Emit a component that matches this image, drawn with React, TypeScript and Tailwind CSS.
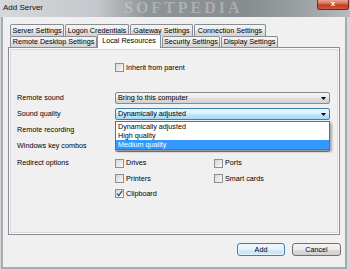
import React from 'react';

type TabProps = { label: string; w: string; active?: boolean };

function Tab({ label, w, active }: TabProps) {
  if (active) {
    return (
      <div
        className={`${w} relative z-10 -mt-[2px] h-[14px] flex items-center justify-center pb-[2px] bg-white border border-b-0 border-[#898c95] rounded-t-[2px]`}
      >
        {label}
      </div>
    );
  }
  return (
    <div
      className={`${w} h-full flex items-center justify-center bg-[linear-gradient(to_bottom,#f4f4f4_0%,#ebebeb_50%,#dddddd_51%,#d4d4d4_100%)] border border-b-0 border-[#898c95] rounded-t-[2px]`}
    >
      {label}
    </div>
  );
}

function Arrow() {
  return (
    <svg width="5" height="3" viewBox="0 0 5 3" className="shrink-0">
      <path d="M0 0h5L2.5 3z" fill="#000" />
    </svg>
  );
}

function Combo({
  value,
  focused,
  children,
}: {
  value: string;
  focused?: boolean;
  children?: React.ReactNode;
}) {
  return (
    <div className="relative w-[215px]">
      <div
        className={`h-[12px] flex items-center pl-[2px] pr-[3px] rounded-[2px] border ${
          focused
            ? 'border-[#3c7fb1] bg-[linear-gradient(to_bottom,#eaf6fd_0%,#d9f0fc_50%,#bee6fd_51%,#a7d9f5_100%)]'
            : 'border-[#8a8a8a] bg-[linear-gradient(to_bottom,#f4f4f4_0%,#ebebeb_50%,#dddddd_51%,#d2d2d2_100%)]'
        }`}
      >
        <span className="flex-1 truncate">{value}</span>
        <Arrow />
      </div>
      {children}
    </div>
  );
}

function Check({ label, checked }: { label: string; checked?: boolean }) {
  return (
    <div className="flex items-center gap-[2px]">
      <div className="w-[9px] h-[9px] shrink-0 border border-[#8e8f8f] bg-[linear-gradient(135deg,#d6d6d6,#f8f8f8)] flex items-center justify-center">
        {checked && (
          <svg width="7" height="7" viewBox="0 0 7 7">
            <path d="M1 3.6L2.8 5.6L6.2 0.8" fill="none" stroke="#2d3f78" strokeWidth="1.2" />
          </svg>
        )}
      </div>
      <span>{label}</span>
    </div>
  );
}

function Row({ label, h = 'h-[16px]', children }: { label?: string; h?: string; children: React.ReactNode }) {
  return (
    <div className={`${h} flex items-center`}>
      <div className="w-[98px] shrink-0">{label}</div>
      {children}
    </div>
  );
}

export default function App() {
  return (
    <div className="w-[350px] h-[270px] overflow-hidden flex flex-col bg-[#d3d7db] font-['Liberation_Sans',Arial,sans-serif] text-[7.2px] leading-none text-black">
      {/* title bar */}
      <div className="relative h-[17px] shrink-0 flex items-center pl-[3px] pb-[2px] overflow-hidden bg-[linear-gradient(to_right,#d6d9dc_0%,#c3c7cb_28%,#8f9496_42%,#878c8e_70%,#9ea3a6_88%,#b7bcc0_100%)]">
        <span className="relative z-10 text-[8px] text-[#111]">Add Server</span>
        <span className="absolute left-[124px] top-0 font-['Liberation_Serif',serif] text-[16px] leading-none font-bold tracking-[3px] text-white/30">
          SOFTPEDIA
        </span>
        <div className="absolute right-[1px] top-0 w-[32px] h-[10px] rounded-b-[3px] border border-t-0 border-[#6e2a1e] bg-[linear-gradient(to_bottom,#e9a898_0%,#d66550_45%,#c23b24_55%,#cf5a3c_100%)] flex items-center justify-center">
          <span className="text-white text-[8px] font-bold leading-none -mt-[1px]">x</span>
        </div>
      </div>

      {/* client */}
      <div className="flex-1 flex pl-[1px] pr-[3px] pb-[1px]">
        <div className="flex-1 flex flex-col bg-[#f0f0f0] border-[2px] border-t-0 border-[#a6abb0] pt-[7px] pl-[5px] pr-[5px]">
          {/* tabs */}
          <div className="ml-[2px] h-[12px] flex gap-[1px]">
            <Tab label="Server Settings" w="w-[54px]" />
            <Tab label="Logon Credentials" w="w-[64px]" />
            <Tab label="Gateway Settings" w="w-[63px]" />
            <Tab label="Connection Settings" w="w-[72px]" />
          </div>
          <div className="ml-[2px] h-[11px] flex items-start">
            <Tab label="Remote Desktop Settings" w="w-[87px]" />
            <Tab label="Local Resources" w="w-[64px]" active />
            <div className="w-[1px]" />
            <Tab label="Security Settings" w="w-[58px]" />
            <div className="w-[1px]" />
            <Tab label="Display Settings" w="w-[57px]" />
          </div>

          {/* panel */}
          <div className="h-[188px] border border-[#898c95] bg-[#f0f0f0] shadow-[inset_0_0_0_1px_#fbfbfb,inset_0_0_0_2px_#dadada] pl-[8px]">
            <div className="mt-[15px] h-[9px] flex items-center">
              <div className="w-[98px] shrink-0" />
              <Check label="Inherit from parent" />
            </div>

            <div className="mt-[18px]">
              <Row label="Remote sound">
                <Combo value="Bring to this computer" />
              </Row>
              <Row label="Sound quality">
                <Combo value="Dynamically adjusted" focused>
                  <div className="absolute left-0 top-[13px] w-[215px] z-20 bg-white border border-[#6b6b6b] shadow-[2px_2px_2px_rgba(0,0,0,0.3)]">
                    <div className="h-[9px] flex items-center pl-[2px]">Dynamically adjusted</div>
                    <div className="h-[9px] flex items-center pl-[2px]">High quality</div>
                    <div className="h-[9px] flex items-center pl-[2px] bg-[#3399ff] text-white">Medium quality</div>
                  </div>
                </Combo>
              </Row>
              <Row label="Remote recording">
                <Combo value="Do not record" />
              </Row>
              <Row label="Windows key combos">
                <Combo value="Only when using the full screen" />
              </Row>
              <div className="mt-[1px]">
                <Row label="Redirect options">
                  <div className="w-[99px]">
                    <Check label="Drives" />
                  </div>
                  <Check label="Ports" />
                </Row>
                <Row h="h-[15px]">
                  <div className="w-[99px]">
                    <Check label="Printers" />
                  </div>
                  <Check label="Smart cards" />
                </Row>
                <Row h="h-[15px]">
                  <Check label="Clipboard" checked />
                </Row>
              </div>
            </div>
          </div>

          {/* buttons */}
          <div className="mt-[8px] -mr-[1px] flex justify-end gap-[7px]">
            <button className="w-[48px] h-[13px] rounded-[3px] border border-[#3c7fb1] bg-[linear-gradient(to_bottom,#f2f9fd_0%,#e4f1fa_50%,#d2e8f6_51%,#c9e3f4_100%)] shadow-[inset_0_0_0_1px_#e8f6fd] flex items-center justify-center leading-none">
              Add
            </button>
            <button className="w-[49px] h-[13px] rounded-[3px] border border-[#707070] bg-[linear-gradient(to_bottom,#f4f4f4_0%,#ebebeb_50%,#dddddd_51%,#cfcfcf_100%)] flex items-center justify-center leading-none">
              Cancel
            </button>
          </div>
        </div>
      </div>
    </div>
  );
}
